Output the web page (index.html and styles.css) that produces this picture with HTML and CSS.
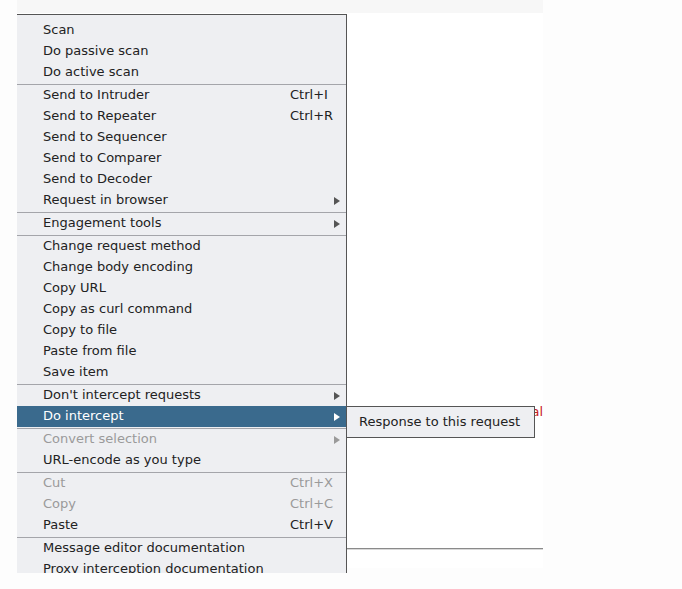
FILE: index.html
```html
<!DOCTYPE html>
<html lang="en">
<head>
    <meta charset="UTF-8">
    <meta name="viewport" content="width=device-width, initial-scale=1.0">
    <title>Message editor context menu</title>
    <link rel="stylesheet" href="styles.css">
</head>
<body>
<div class="screen">
    <div class="editor">
        <div class="editor-top"></div>
        <div class="editor-body">
            <div class="notice"><span>held in the proxy for manual</span></div>
            <div class="rule"></div>
        </div>
    </div>

    <div class="menu">
        <div class="item"><span>Scan</span></div>
        <div class="item"><span>Do passive scan</span></div>
        <div class="item"><span>Do active scan</span></div>
        <div class="sep"></div>
        <div class="item"><span>Send to Intruder</span><span class="key">Ctrl+I</span></div>
        <div class="item"><span>Send to Repeater</span><span class="key">Ctrl+R</span></div>
        <div class="item"><span>Send to Sequencer</span></div>
        <div class="item"><span>Send to Comparer</span></div>
        <div class="item"><span>Send to Decoder</span></div>
        <div class="item"><span>Request in browser</span><span></span><i class="arrow"></i></div>
        <div class="sep"></div>
        <div class="item"><span>Engagement tools</span><span></span><i class="arrow"></i></div>
        <div class="sep"></div>
        <div class="item"><span>Change request method</span></div>
        <div class="item"><span>Change body encoding</span></div>
        <div class="item"><span>Copy URL</span></div>
        <div class="item"><span>Copy as curl command</span></div>
        <div class="item"><span>Copy to file</span></div>
        <div class="item"><span>Paste from file</span></div>
        <div class="item"><span>Save item</span></div>
        <div class="sep"></div>
        <div class="item"><span>Don't intercept requests</span><span></span><i class="arrow"></i></div>
        <div class="item selected"><span>Do intercept</span><span></span><i class="arrow"></i></div>
        <div class="sep"></div>
        <div class="item disabled"><span>Convert selection</span><span></span><i class="arrow"></i></div>
        <div class="item"><span>URL-encode as you type</span></div>
        <div class="sep"></div>
        <div class="item disabled"><span>Cut</span><span class="key">Ctrl+X</span></div>
        <div class="item disabled"><span>Copy</span><span class="key">Ctrl+C</span></div>
        <div class="item"><span>Paste</span><span class="key">Ctrl+V</span></div>
        <div class="sep"></div>
        <div class="item"><span>Message editor documentation</span></div>
        <div class="item"><span>Proxy interception documentation</span></div>
    </div>

    <div class="submenu">
        <div class="subitem">Response to this request</div>
    </div>
</div>
</body>
</html>
```

FILE: styles.css
```css
body {
    margin: 0;
    background: #fdfdfd;
    font-family: "DejaVu Sans", Verdana, sans-serif;
    font-size: 13px;
    color: #222;
}
.screen {
    position: relative;
    width: 682px;
    height: 589px;
    overflow: hidden;
}
.editor {
    margin-left: 17px;
    width: 526px;
}
.editor-top {
    height: 13px;
    background: #f7f7f7;
}
.editor-body {
    height: 555px;
    background: #fff;
    overflow: hidden;
    padding-top: 388px;
    box-sizing: border-box;
}
.notice {
    display: flex;
    justify-content: flex-end;
    color: #c8211f;
    line-height: 21px;
    white-space: nowrap;
}
.rule {
    margin-top: 126px;
    height: 1px;
    background: #8a8a8a;
    border-bottom: 1px solid #d8d8d8;
}
.menu {
    position: absolute;
    left: 17px;
    top: 14px;
    width: 329px;
    height: 553px;
    padding-top: 5px;
    background: #eeeff2;
    border-top: 1px solid #555;
    border-right: 1px solid #555;
    overflow: hidden;
}
.item {
    display: grid;
    grid-template-columns: 247px 44px 12px;
    padding-left: 26px;
    height: 21px;
    line-height: 19px;
    white-space: nowrap;
}
.item.selected {
    background: #3a6a8d;
    color: #fff;
}
.item.disabled {
    color: #9a9a9a;
}
.sep {
    height: 1px;
    border-bottom: 1px solid #a4a5aa;
}
.arrow {
    align-self: center;
    margin-top: 1px;
    width: 0;
    height: 0;
    border-left: 6px solid #555;
    border-top: 4px solid transparent;
    border-bottom: 4px solid transparent;
}
.selected .arrow {
    border-left-color: #fff;
}
.disabled .arrow {
    border-left-color: #9a9a9a;
}
.submenu {
    position: absolute;
    left: 346px;
    top: 406px;
    width: 187px;
    height: 30px;
    background: #eeeff2;
    border: 1px solid #555;
}
.subitem {
    padding-left: 12px;
    line-height: 30px;
    white-space: nowrap;
}
```
